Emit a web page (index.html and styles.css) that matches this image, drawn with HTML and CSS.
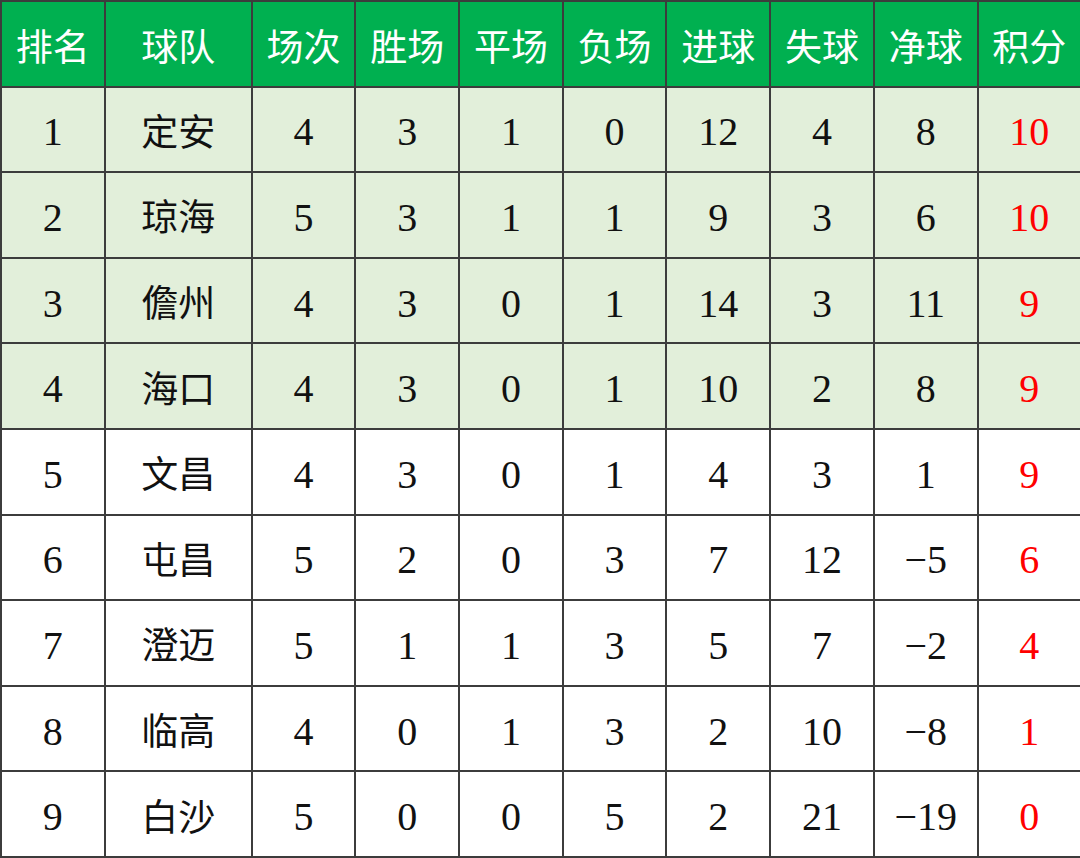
FILE: index.html
```html
<!DOCTYPE html>
<html lang="zh">
<head>
<meta charset="utf-8">
<title>积分榜</title>
<link rel="stylesheet" href="styles.css">
</head>
<body>
<table class="standings">
  <colgroup>
    <col class="c-n"><col class="c-team"><col class="c-n"><col class="c-n"><col class="c-n">
    <col class="c-n"><col class="c-n"><col class="c-n"><col class="c-n"><col class="c-n">
  </colgroup>
  <thead>
    <tr class="head">
      <th>排名</th><th>球队</th><th>场次</th><th>胜场</th><th>平场</th><th>负场</th><th>进球</th><th>失球</th><th>净球</th><th>积分</th>
    </tr>
  </thead>
  <tbody>
    <tr class="top"><td>1</td><td class="team">定安</td><td>4</td><td>3</td><td>1</td><td>0</td><td>12</td><td>4</td><td>8</td><td class="pts">10</td></tr>
    <tr class="top"><td>2</td><td class="team">琼海</td><td>5</td><td>3</td><td>1</td><td>1</td><td>9</td><td>3</td><td>6</td><td class="pts">10</td></tr>
    <tr class="top"><td>3</td><td class="team">儋州</td><td>4</td><td>3</td><td>0</td><td>1</td><td>14</td><td>3</td><td>11</td><td class="pts">9</td></tr>
    <tr class="top"><td>4</td><td class="team">海口</td><td>4</td><td>3</td><td>0</td><td>1</td><td>10</td><td>2</td><td>8</td><td class="pts">9</td></tr>
    <tr><td>5</td><td class="team">文昌</td><td>4</td><td>3</td><td>0</td><td>1</td><td>4</td><td>3</td><td>1</td><td class="pts">9</td></tr>
    <tr><td>6</td><td class="team">屯昌</td><td>5</td><td>2</td><td>0</td><td>3</td><td>7</td><td>12</td><td>−5</td><td class="pts">6</td></tr>
    <tr><td>7</td><td class="team">澄迈</td><td>5</td><td>1</td><td>1</td><td>3</td><td>5</td><td>7</td><td>−2</td><td class="pts">4</td></tr>
    <tr><td>8</td><td class="team">临高</td><td>4</td><td>0</td><td>1</td><td>3</td><td>2</td><td>10</td><td>−8</td><td class="pts">1</td></tr>
    <tr><td>9</td><td class="team">白沙</td><td>5</td><td>0</td><td>0</td><td>5</td><td>2</td><td>21</td><td>−19</td><td class="pts">0</td></tr>
  </tbody>
</table>
</body>
</html>
```
FILE: styles.css
```css
html, body {
  margin: 0;
  padding: 0;
  background: #ffffff;
}

.standings {
  width: 1080px;
  height: 858px;
  border-collapse: collapse;
  table-layout: fixed;
  font-family: "Liberation Serif", "Noto Sans CJK SC", serif;
  color: #111111;
}

.c-n { width: 103.7px; }
.c-team { width: 147px; }

.standings tr {
  height: 85.6px;
}

.standings th,
.standings td {
  border: 2px solid #3c3c3c;
  text-align: center;
  vertical-align: middle;
  padding: 0;
}

.standings th {
  background: #00b050;
  color: #ffffff;
  font-family: "Noto Sans CJK SC", sans-serif;
  font-weight: 400;
  font-size: 37px;
  line-height: 1;
  padding-top: 4px;
}

.standings td {
  font-size: 40px;
  line-height: 1;
  padding-top: 6px;
}

.standings td.team {
  font-family: "Noto Sans CJK SC", sans-serif;
  font-size: 37px;
  padding-top: 2px;
}

.top td {
  background: #e2efda;
}

.standings td.pts {
  color: #ff0000;
}
```
